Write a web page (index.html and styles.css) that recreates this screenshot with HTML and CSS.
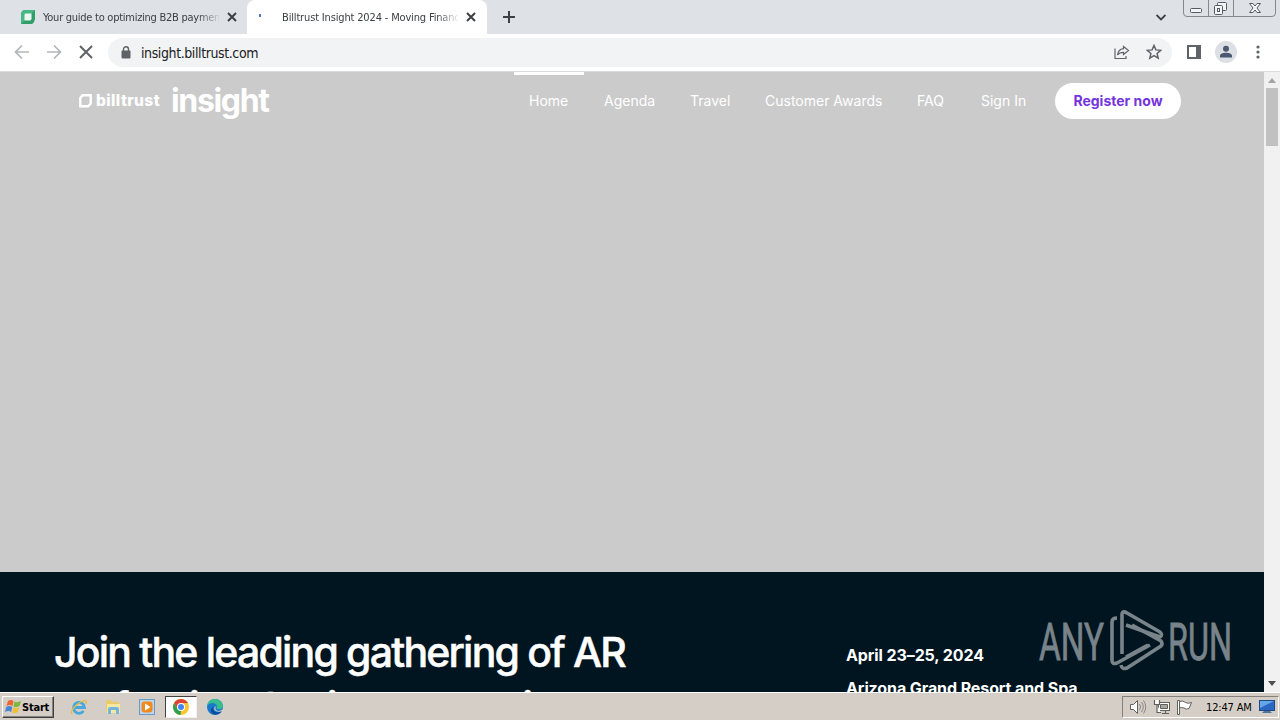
FILE: index.html
```
<!DOCTYPE html>
<html lang="en">
<head>
    <meta charset="UTF-8">
    <meta name="viewport" content="width=device-width, initial-scale=1.0">
    <title>Billtrust Insight 2024</title>
    <link rel="stylesheet" href="styles.css">
</head>
<body>
    <!-- Browser tabs -->
    <div class="tab-strip">
        <div class="tab">
            <svg class="favicon" width="14" height="14" viewBox="0 0 14 14"><path d="M4 0H14V9Q13 14 10 14H0V4Q1 0 4 0Z" fill="#2f9e69"/><path d="M4 0H14L10 4H4V10L0 14V4Q1 0 4 0Z" fill="#46b883"/><path d="M4 3.500H10.500V9L9.500 10.500H3.500V5Z" fill="#eef5f3"/></svg>
            <span class="tab-title">Your guide to optimizing B2B payments</span>
            <svg class="tab-close" width="10" height="10" viewBox="0 0 10 10"><path d="M1 1L9 9M9 1L1 9"/></svg>
        </div>
        <div class="tab active">
            <span class="loading-dot"></span>
            <span class="tab-title">Billtrust Insight 2024 - Moving Finance</span>
            <svg class="tab-close" width="10" height="10" viewBox="0 0 10 10"><path d="M1 1L9 9M9 1L1 9"/></svg>
        </div>
        <svg class="new-tab" width="12" height="12" viewBox="0 0 12 12"><path d="M6 0V12M0 6H12" stroke="#3c4043" stroke-width="2"/></svg>
        <svg class="tab-search" width="10" height="7" viewBox="0 0 10 7"><path d="M.5 1L5 5.500L9.500 1" fill="none" stroke="#3c4043" stroke-width="1.800"/></svg>
        <svg class="window-buttons" width="94" height="18" viewBox="0 0 94 18">
            <path d="M.5 0V13Q.5 16.500 4 16.500H89Q92.500 16.500 92.500 13V0M25.500 0V16M50.500 0V16" fill="none" stroke="#84888f"/>
            <g fill="#f3f4f6" stroke="#555b66"><rect x="7.500" y="8.500" width="11" height="4" rx="1"/><rect x="34.500" y="2.500" width="9" height="8" rx="1"/><rect x="31.500" y="5.500" width="8" height="9" rx="1"/><rect x="34.500" y="8.500" width="2" height="3"/><path d="M66.500 3.500H70L72 6L74 3.500H77.500L74 8L77.500 12.500H74L72 10L70 12.500H66.500L70 8Z"/></g>
        </svg>
    </div>

    <!-- Address bar -->
    <div class="toolbar">
        <svg class="nav-buttons" width="80" height="16" viewBox="0 0 80 16" fill="none" stroke-width="1.700">
            <path d="M15 8H2M8 1.500L1.500 8L8 14.500M33 8H46M40 1.500L46.500 8L40 14.500" stroke="#b4b6b9"/>
            <path d="M66 2L78 14M78 2L66 14" stroke="#5f6368" stroke-width="2"/>
        </svg>
        <div class="address">
            <svg width="10" height="13" viewBox="0 0 10 13"><rect x=".5" y="4.500" width="9" height="8" rx="1" fill="#5f6368"/><path d="M2.500 5V3.200a2.500 2.500 0 0 1 5 0V5" fill="none" stroke="#5f6368" stroke-width="1.400"/></svg>
            <span class="url">insight.billtrust.com</span>
            <svg class="share" width="16" height="16" viewBox="0 0 16 16" fill="none" stroke="#5f6368" stroke-width="1.200"><path d="M1 4.500V14.500H12V12M9.500 2.500L14.500 6.500L9.500 10.500V8.300C7 8.300 5 9 3.500 11C4 7.500 6 5.200 9.500 4.700Z"/></svg>
            <svg class="star" width="16" height="16" viewBox="0 0 16 16"><path d="M8 1.500L9.900 5.900L14.700 6.300L11.100 9.500L12.200 14.200L8 11.700L3.800 14.200L4.900 9.500L1.300 6.300L6.100 5.900Z" fill="none" stroke="#5f6368" stroke-width="1.500"/></svg>
        </div>
        <svg class="side-panel" width="14" height="14" viewBox="0 0 14 14"><path d="M1 1H13V13H1Z" fill="none" stroke="#5f6368" stroke-width="2"/><path d="M9 0H14V14H9Z" fill="#5f6368"/></svg>
        <svg class="profile" width="22" height="22" viewBox="0 0 22 22"><circle cx="11" cy="11" r="11" fill="#dcdfe4"/><circle cx="11" cy="7.700" r="3" fill="#4b5872"/><path d="M5 16.500V15C5 12.500 8.500 11.800 11 11.800S17 12.500 17 15V16.500Z" fill="#4b5872"/></svg>
        <svg class="menu" width="4" height="14" viewBox="0 0 4 14" fill="#5f6368"><circle cx="2" cy="2" r="1.600"/><circle cx="2" cy="7" r="1.600"/><circle cx="2" cy="12" r="1.600"/></svg>
    </div>

    <!-- Page -->
    <div class="viewport">
        <div class="page">
            <div class="hero">
                <div class="logo">
                    <svg width="13" height="14" viewBox="0 0 13 14"><path d="M3.500 1.300H11.700V9.500L9.200 12.300H1.300V4Z" fill="none" stroke="#fff" stroke-width="2.400"/></svg>
                    <span class="logo-brand">billtrust</span>
                    <span class="logo-name">insight</span>
                </div>
                <nav class="nav">
                    <a class="nav-link current">Home</a>
                    <a class="nav-link agenda">Agenda</a>
                    <a class="nav-link travel">Travel</a>
                    <a class="nav-link awards">Customer Awards</a>
                    <a class="nav-link faq">FAQ</a>
                    <a class="nav-link sign-in">Sign In</a>
                    <a class="register">Register now</a>
                </nav>
            </div>
            <div class="intro">
                <h1 class="intro-title">Join the leading gathering of AR<br><span class="second-line">professionals <span class="in">in</span> some unique</span></h1>
                <div class="event-info">
                    <p class="date">April 23–25, 2024</p>
                    <p>Arizona Grand Resort and Spa</p>
                </div>
            </div>
        </div>
        <div class="scrollbar">
            <span class="arrow-up"></span>
            <span class="thumb"></span>
            <span class="arrow-down"></span>
        </div>
        <svg class="watermark" width="200" height="70" viewBox="0 0 200 70">
            <text x="4" y="55" textLength="65" lengthAdjust="spacingAndGlyphs">ANY</text>
            <text x="133" y="55" textLength="64" lengthAdjust="spacingAndGlyphs">RUN</text>
            <g fill="none" stroke="#78838a" stroke-width="3.600" stroke-linejoin="round">
                <path d="M87 49V10Q87 5 92 8L125 27Q128 30 125 32L91 20"/>
                <path d="M82 13Q77 13 77 17V55Q77 60 82 58L115 40"/>
                <path d="M86 60Q87 65 92 63L126 41Q128 39 126 36L97 20M91 52L113 40"/>
            </g>
        </svg>
    </div>

    <!-- Taskbar -->
    <div class="taskbar">
        <div class="start">
            <svg width="17" height="16" viewBox="0 0 17 16"><path d="M3 2Q6 0 8.500 2L7.500 7Q5 5 1.500 7Z" fill="#ee6530"/><path d="M9.500 2.500Q12 4 16 2L14.500 7Q11 9 8.500 7.500Z" fill="#7db83e"/><path d="M1.200 8Q4.500 6 7.300 8L6.200 13Q3.500 11 0 13Z" fill="#4c86d2"/><path d="M8.300 8.500Q11 10 14.300 8L13 13Q10 15 7.200 13.500Z" fill="#f4bd37"/></svg>
            <span>Start</span>
        </div>
        <div class="quick-launch">
            <svg width="18" height="18" viewBox="0 0 18 18"><path d="M4.500 9.500H14.500A5.500 5.500 0 1 0 13.500 13" fill="none" stroke="#45a9df" stroke-width="2.800"/><path d="M2 16C-1 12 12 1 16 3Q17 4 15.500 6" fill="none" stroke="#e7bd41" stroke-width="1.400"/></svg>
            <svg width="18" height="18" viewBox="0 0 18 18"><path d="M2 4L3 2H7L8 4H15V14H2Z" fill="#eccb67"/><path d="M3 6H16V15H3Z" fill="#f9e7a1"/><path d="M4 16V11Q4 9 6 9H13Q15 9 15 11V16H12V12H7V16Z" fill="#72b6dd"/></svg>
            <svg width="18" height="18" viewBox="0 0 18 18"><rect x="1.500" y="1.500" width="15" height="15" fill="#b9d6ee" stroke="#6c9ac6"/><rect x="3.500" y="3.500" width="11" height="11" rx="3" fill="#f18a1d"/><path d="M7 5.500L12.500 9L7 12.500Z" fill="#fff"/></svg>
            <span class="running">
                <svg width="16" height="16" viewBox="0 0 16 16"><circle cx="8" cy="8" r="8" fill="#f8c62e"/><path d="M1.100 4A8 8 0 0 1 14.900 4L8 4.200L4.500 10Z" fill="#dc4437"/><path d="M1.100 4L4.700 10L8 12L7.500 16A8 8 0 0 1 1.100 4Z" fill="#2fa052"/><circle cx="8" cy="8" r="4" fill="#fff"/><circle cx="8" cy="8" r="3" fill="#4285f4"/></svg>
            </span>
            <svg width="18" height="18" viewBox="0 0 18 18"><circle cx="9" cy="9" r="8" fill="#1679cb"/><path d="M1.200 8C2 3 5 1 9 1C14 1 17 5 17 8C17 12 11 12 10.500 10C12 7 9 5 6 5Q3 5 1.200 8Z" fill="#39bd8f"/><path d="M8 8Q6 10 8 13Q11 15.500 16 13Q12 18 7 16Q2 12 8 8Z" fill="#0d4d9c"/><path d="M10 8Q8 12 12 13Q15 13 17 11L17 13Q11 15 8.500 12Q7.500 9 10 8Z" fill="#d5cec7"/></svg>
        </div>
        <div class="tray">
            <svg width="66" height="18" viewBox="0 0 66 18" fill="#fff" stroke="#62605d">
                <path d="M1.500 6.500H4.500L8.500 2.500V15.500L4.500 11.500H1.500Z"/><path d="M10.500 6Q12.500 9 10.500 12M12.500 4Q16 9 12.500 14M14.500 2.500Q19 9 14.500 15.500" fill="none" stroke="#8b8885"/>
                <rect x="29.500" y="4.500" width="11" height="8"/><path d="M31.500 6.500H38.500V10.500H31.500Z" fill="#aaa6a2"/><path d="M33 15.500H40M36.500 13V15M25.500 2V6.500H30.500V2M28 7V14.500H32" stroke-width="1.200"/>
                <path d="M48.500 2.500H50.500V16.500H48.500ZM50.500 3.500Q54 2 56.500 4.500Q59 6 62.500 4.500L60 10.500Q57 12 55 10Q52 9 50.500 10Z"/>
            </svg>
            <span class="clock">12:47 AM</span>
            <svg width="16" height="14" viewBox="0 0 16 14"><rect x=".5" y=".5" width="15" height="10" fill="#2b68c4" stroke="#204985"/><path d="M1 1H15L1 8Z" fill="#65a5e8"/><path d="M5 11H11L13 13H3Z" fill="#51759d"/></svg>
        </div>
    </div>
</body>
</html>
```
FILE: styles.css
```
* {
    margin: 0;
    padding: 0;
    box-sizing: border-box;
}

body {
    width: 1280px;
    height: 720px;
    overflow: hidden;
    display: flex;
    flex-direction: column;
    font-family: Inter, 'Liberation Sans', sans-serif;
}

svg {
    display: block;
    flex-shrink: 0;
}

.tab-strip {
    height: 34px;
    background-color: #dee1e6;
    display: flex;
    align-items: center;
}

.tab {
    width: 247px;
    height: 34px;
    padding-left: 21px;
    display: flex;
    align-items: center;
}

.tab.active {
    width: 240px;
    padding-left: 12px;
    background-color: white;
    border-radius: 8px 8px 0 0;
}

.tab-title {
    width: 176px;
    margin-left: 8px;
    overflow: hidden;
    white-space: nowrap;
    font-family: 'DejaVu Sans Condensed', 'DejaVu Sans', sans-serif;
    font-stretch: condensed;
    font-size: 11px;
    letter-spacing: -0.26px;
    color: #3c4043;
    -webkit-mask-image: linear-gradient(to right, black 155px, transparent 178px);
    mask-image: linear-gradient(to right, black 155px, transparent 178px);
}

.active .tab-title {
    margin-left: 21px;
    letter-spacing: -0.16px;
}

.tab-close {
    margin-left: 8px;
    fill: none;
    stroke: #3c4043;
    stroke-width: 2;
}

.loading-dot {
    width: 2px;
    height: 3px;
    margin-top: -3px;
    background-color: #5277cf;
}

.new-tab {
    margin-left: 16px;
}

.tab-search {
    margin-left: auto;
}

.window-buttons {
    align-self: flex-start;
    margin: 0 3px 0 17px;
}

.toolbar {
    height: 38px;
    padding-bottom: 1px;
    background-color: white;
    border-bottom: 1px solid #d9dbdd;
    display: flex;
    align-items: center;
}

.nav-buttons {
    margin-left: 14px;
}

.address {
    width: 1064px;
    height: 29px;
    margin-left: 14px;
    padding: 0 10px 0 13px;
    background-color: #f1f3f4;
    border-radius: 15px;
    display: flex;
    align-items: center;
}

.url {
    margin-left: 10px;
    padding-top: 1px;
    font-family: 'DejaVu Sans Condensed', 'DejaVu Sans', sans-serif;
    font-stretch: condensed;
    font-size: 14px;
    letter-spacing: -0.4px;
    color: #202124;
}

.share {
    margin-left: auto;
}

.star {
    margin-left: 16px;
}

.side-panel {
    margin-left: 15px;
}

.profile {
    margin-left: 14px;
}

.menu {
    margin-left: 19px;
}

.viewport {
    position: relative;
    height: 620px;
    display: flex;
}

.page {
    width: 1264px;
    overflow: hidden;
}

.hero {
    height: 500px;
    padding: 0 83px 0 79px;
    background-color: #cbcbcb;
    color: white;
    display: flex;
    justify-content: space-between;
    align-items: flex-start;
}

.logo {
    height: 57px;
    display: flex;
    align-items: center;
}

.logo-brand {
    width: 65px;
    margin-left: 4px;
    font-size: 15.5px;
    font-weight: 800;
    letter-spacing: 0.4px;
}

.logo-name {
    margin-left: 10px;
    font-size: 32px;
    font-weight: 700;
    letter-spacing: -1.35px;
    line-height: 55px;
}

.nav {
    display: flex;
    align-items: flex-start;
    font-size: 14px;
    white-space: nowrap;
}

.nav-link {
    height: 57px;
    line-height: 57px;
    margin-right: 35px;
}

.nav-link.current {
    width: 70px;
    margin-right: 20px;
    padding-left: 15px;
    border-top: 3px solid white;
    line-height: 51px;
}

.agenda {
    width: 51px;
}

.travel {
    width: 40px;
}

.awards {
    width: 117px;
}

.faq {
    width: 29px;
}

.sign-in {
    width: 44px;
    margin-right: 30px;
}

.register {
    width: 126px;
    height: 36px;
    margin-top: 11px;
    line-height: 35px;
    text-align: center;
    background-color: white;
    border-radius: 18px;
    color: #7433dc;
    font-weight: 700;
    letter-spacing: 0;
}

.intro {
    height: 120px;
    padding: 59px 56px 0 54px;
    background-color: #00151f;
    color: white;
    display: flex;
}

.intro-title {
    width: 792px;
    font-size: 41px;
    font-weight: 500;
    line-height: 42px;
    letter-spacing: -1.8px;
    white-space: nowrap;
    -webkit-text-stroke: 0.5px white;
}

.second-line {
    display: inline-block;
    margin-top: 13px;
}

.in {
    margin-left: 24px;
}

.event-info {
    padding-top: 12px;
    font-size: 16px;
    font-weight: 700;
    line-height: 24px;
    letter-spacing: -0.1px;
    white-space: nowrap;
}

.date {
    margin-bottom: 9px;
}

.scrollbar {
    width: 16px;
    background-color: #f1f1f1;
    display: flex;
    flex-direction: column;
    align-items: center;
}

.arrow-up {
    margin-top: 6px;
    border: 4px solid transparent;
    border-top: 0;
    border-bottom: 5px solid #a3a3a3;
}

.thumb {
    width: 12px;
    height: 58px;
    margin-top: 5px;
    background-color: #c1c1c1;
}

.arrow-down {
    margin-top: auto;
    margin-bottom: 6px;
    border: 4px solid transparent;
    border-bottom: 0;
    border-top: 5px solid #505050;
}

.watermark {
    position: absolute;
    left: 1035px;
    top: 533px;
}

.watermark text {
    font-family: Roboto, sans-serif;
    font-size: 52px;
    fill: #78838a;
    stroke: #78838a;
    stroke-width: 0.8px;
}

.taskbar {
    height: 28px;
    padding: 2px 1px 0 2px;
    background-color: #d5cec7;
    box-shadow: inset 0 1px white;
    display: flex;
    align-items: center;
}

.start {
    width: 52px;
    height: 22px;
    padding-left: 2px;
    border: 1px solid;
    border-color: white #404040 #404040 white;
    box-shadow: inset -1px -1px #85817c;
    display: flex;
    align-items: center;
    font-family: 'DejaVu Sans Condensed', 'DejaVu Sans', sans-serif;
    font-stretch: condensed;
    font-size: 11px;
    font-weight: 700;
    letter-spacing: -0.2px;
}

.quick-launch {
    margin-left: 16px;
    display: flex;
    align-items: center;
    gap: 16px;
}

.running {
    width: 32px;
    height: 22px;
    margin: 0 -7px;
    background-color: white;
    border: 1px solid;
    border-color: #404040 #f3f1ee #f3f1ee #404040;
    display: flex;
    align-items: center;
    justify-content: center;
}

.tray {
    width: 157px;
    height: 22px;
    margin-left: auto;
    padding-left: 6px;
    border: 1px solid;
    border-color: #85817c white white #85817c;
    display: flex;
    align-items: center;
}

.clock {
    width: 48px;
    margin: 0 5px 0 11px;
    font-family: 'DejaVu Sans Condensed', 'DejaVu Sans', sans-serif;
    font-stretch: condensed;
    font-size: 11px;
    letter-spacing: -0.15px;
    white-space: nowrap;
}
```
